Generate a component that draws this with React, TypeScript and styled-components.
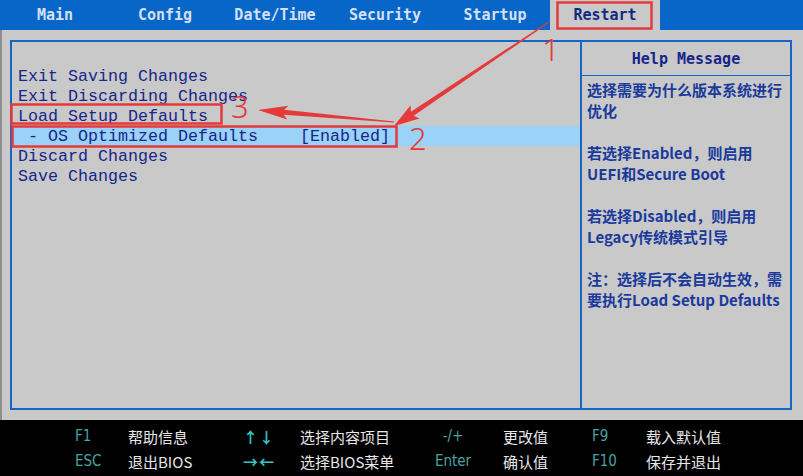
import styled, { createGlobalStyle } from 'styled-components'

const GlobalStyle = createGlobalStyle`
    html, body {
        margin: 0;
        padding: 0;
        background: #c9c9c9;
    }
    body {
        width: 803px;
        height: 476px;
        overflow: hidden;
    }
`

const Screen = styled.div`
    background: #c9c9c9;
    display: flex;
    flex-direction: column;
    height: 476px;
    position: relative;
    width: 803px;
`

const TabBar = styled.nav`
    background: #0866c8;
    display: flex;
    flex-shrink: 0;
    height: 30px;
`

const Tab = styled.div<{ $active?: boolean }>`
    align-items: center;
    background: ${(p) => (p.$active ? '#c9c9c9' : 'transparent')};
    color: ${(p) => (p.$active ? '#142a82' : '#d4e0f4')};
    display: flex;
    font-family: 'DejaVu Sans Mono', monospace;
    font-size: 15px;
    font-weight: bold;
    justify-content: center;
    width: 110px;
`

const Body = styled.main`
    border-left: 2px solid #8e8e8e;
    flex: 1;
    padding: 10px 11px 10px 8px;
`

const Panel = styled.section`
    border: 2px solid #1766c6;
    box-sizing: border-box;
    display: grid;
    grid-template-columns: 568px 1fr;
    height: 100%;
`

const Menu = styled.ul`
    list-style: none;
    margin: 0;
    padding: 24px 0 0;
`

const Item = styled.li<{ $selected?: boolean }>`
    background: ${(p) => (p.$selected ? '#9ad2f8' : 'transparent')};
    color: #16268a;
    display: flex;
    font-family: 'Liberation Mono', monospace;
    font-size: 16.67px;
    height: 20px;
    line-height: 21px;
    padding-left: 6px;
    white-space: pre;
`

const ItemLabel = styled.span`
    width: 282px;
`

const Help = styled.aside`
    border-left: 2px solid #1766c6;
    display: flex;
    flex-direction: column;
`

const HelpTitle = styled.div`
    align-items: center;
    border-bottom: 1px solid #1766c6;
    color: #16268a;
    display: flex;
    font-family: 'DejaVu Sans Mono', monospace;
    font-size: 15px;
    font-weight: bold;
    height: 33px;
    justify-content: center;
`

const HelpBody = styled.div`
    color: #1a3a9c;
    font-family: 'Noto Sans CJK SC', 'Noto Sans', sans-serif;
    font-size: 15px;
    font-weight: bold;
    line-height: 21px;
    padding: 3px 0 0 5px;
`

const Para = styled.p`
    margin: 0 0 21px;
`

const Line = styled.span`
    display: block;
    white-space: nowrap;
`

const Footer = styled.footer`
    background: #000;
    box-sizing: border-box;
    display: grid;
    flex-shrink: 0;
    font-family: 'DejaVu Sans Condensed', 'Liberation Sans Narrow', 'Noto Sans CJK SC', sans-serif;
    font-size: 15px;
    font-stretch: condensed;
    grid-template-columns: 53px 115px 57px 128px 50px 114px 54px 1fr;
    height: 56px;
    line-height: 19px;
    padding: 7px 0 0 75px;
`

const Key = styled.span<{ $center?: boolean }>`
    color: #4aa2a2;
    text-align: ${(p) => (p.$center ? 'center' : 'left')};
    white-space: nowrap;
`

const ArrowKey = styled.span`
    color: #36c6c6;
    font-family: 'Noto Sans CJK SC', sans-serif;
    font-size: 15px;
    font-stretch: normal;
    font-weight: bold;
    letter-spacing: 1px;
    white-space: nowrap;
`

const Desc = styled.span<{ $indent?: number }>`
    color: #e8e8e8;
    font-family: 'Noto Sans CJK SC', sans-serif;
    font-stretch: normal;
    padding-left: ${(p) => p.$indent ?? 0}px;
    white-space: nowrap;
`

const Overlay = styled.svg`
    left: 0;
    pointer-events: none;
    position: absolute;
    top: 0;
`

const Mark = styled.text`
    fill: #e23a3a;
    font-family: 'Noto Sans', 'DejaVu Sans', sans-serif;
    font-size: 31px;
    font-weight: 300;
`

const tabs = ['Main', 'Config', 'Date/Time', 'Security', 'Startup', 'Restart']

const items = [
    'Exit Saving Changes',
    'Exit Discarding Changes',
    'Load Setup Defaults',
    null,
    'Discard Changes',
    'Save Changes',
]

const help = [
    ['选择需要为什么版本系统进行', '优化'],
    ['若选择Enabled，则启用', 'UEFI和Secure Boot'],
    ['若选择Disabled，则启用', 'Legacy传统模式引导'],
    ['注：选择后不会自动生效，需', '要执行Load Setup Defaults'],
]

// tapered annotation arrow, thin at the tail and barbed at the tip
function arrow(x1: number, y1: number, x2: number, y2: number, neck: number, head: number, headLen: number) {
    const len = Math.hypot(x2 - x1, y2 - y1)
    const ux = (x2 - x1) / len
    const uy = (y2 - y1) / len
    const nx = -uy
    const ny = ux
    const bx = x2 - ux * headLen
    const by = y2 - uy * headLen
    const hx = x2 - ux * headLen * 1.15
    const hy = y2 - uy * headLen * 1.15
    const pts = [
        [x1 + nx * 0.6, y1 + ny * 0.6],
        [bx + nx * neck, by + ny * neck],
        [hx + nx * head, hy + ny * head],
        [x2, y2],
        [hx - nx * head, hy - ny * head],
        [bx - nx * neck, by - ny * neck],
        [x1 - nx * 0.6, y1 - ny * 0.6],
    ]
    return pts.map(([x, y]) => `${x.toFixed(1)},${y.toFixed(1)}`).join(' ')
}

function App() {
    return (
        <Screen>
            <GlobalStyle />
            <TabBar>
                {tabs.map((t) => (
                    <Tab key={t} $active={t === 'Restart'}>
                        {t}
                    </Tab>
                ))}
            </TabBar>
            <Body>
                <Panel>
                    <Menu>
                        {items.map((it, i) =>
                            it ? (
                                <Item key={i}>{it}</Item>
                            ) : (
                                <Item key={i} $selected>
                                    <ItemLabel>{' - OS Optimized Defaults'}</ItemLabel>
                                    [Enabled]
                                </Item>
                            )
                        )}
                    </Menu>
                    <Help>
                        <HelpTitle>Help Message</HelpTitle>
                        <HelpBody>
                            {help.map((p, i) => (
                                <Para key={i}>
                                    {p.map((l) => (
                                        <Line key={l}>{l}</Line>
                                    ))}
                                </Para>
                            ))}
                        </HelpBody>
                    </Help>
                </Panel>
            </Body>
            <Footer>
                <Key>F1</Key>
                <Desc>帮助信息</Desc>
                <ArrowKey>↑↓</ArrowKey>
                <Desc>选择内容项目</Desc>
                <Key $center>-/+</Key>
                <Desc $indent={25}>更改值</Desc>
                <Key>F9</Key>
                <Desc>载入默认值</Desc>
                <Key>ESC</Key>
                <Desc>退出BIOS</Desc>
                <ArrowKey>→←</ArrowKey>
                <Desc>选择BIOS菜单</Desc>
                <Key $center>Enter</Key>
                <Desc $indent={25}>确认值</Desc>
                <Key>F10</Key>
                <Desc>保存并退出</Desc>
            </Footer>
            <Overlay width="803" height="476" viewBox="0 0 803 476">
                <g fill="none" stroke="#e53a3a" strokeWidth="2.5">
                    <rect x="557.5" y="2.5" width="94" height="26" />
                    <rect x="11.5" y="104.5" width="210" height="19" />
                    <rect x="12.5" y="126.5" width="384" height="20" />
                </g>
                <g fill="#e53a3a">
                    <polygon points={arrow(549, 22, 394, 126, 2.5, 8, 22)} />
                    <polygon points={arrow(394, 122, 258, 110, 2.5, 7, 26)} />
                </g>
                <Mark x="542" y="61">1</Mark>
                <Mark x="409" y="150">2</Mark>
                <Mark x="231" y="118">3</Mark>
            </Overlay>
        </Screen>
    )
}

export default App
